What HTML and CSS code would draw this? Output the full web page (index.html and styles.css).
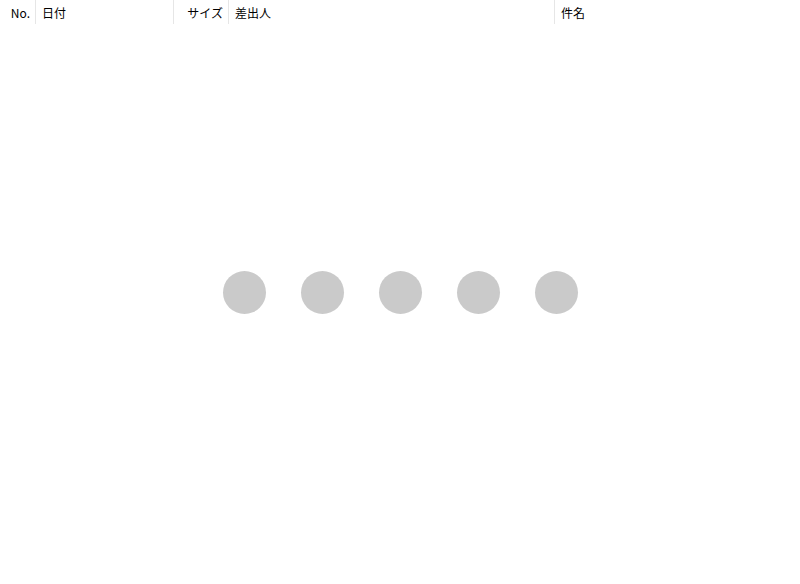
FILE: index.html
```html
<!DOCTYPE html>
<html lang="ja">
<head>
<meta charset="utf-8">
<title>メール一覧</title>
<link rel="stylesheet" href="styles.css">
</head>
<body>
<div class="page">
  <div class="header">
    <div class="cell col-no">No.</div>
    <div class="cell col-date">日付</div>
    <div class="cell col-size">サイズ</div>
    <div class="cell col-from">差出人</div>
    <div class="cell col-subject">件名</div>
  </div>
  <div class="main">
    <div class="loader">
      <span class="dot"></span>
      <span class="dot"></span>
      <span class="dot"></span>
      <span class="dot"></span>
      <span class="dot"></span>
    </div>
  </div>
</div>
</body>
</html>
```
FILE: styles.css
```css
html, body {
  margin: 0;
  padding: 0;
  background: #ffffff;
}
body {
  font-family: "Noto Sans CJK JP", "Noto Sans", sans-serif;
  font-size: 12px;
  color: #000000;
}
.page {
  display: flex;
  flex-direction: column;
  height: 584px;
}
.header {
  display: flex;
  height: 24px;
  flex: none;
}
.cell {
  box-sizing: border-box;
  height: 24px;
  line-height: 25px;
  border-right: 1px solid #e6e6e6;
  white-space: nowrap;
}
.col-no {
  width: 36px;
  text-align: right;
  padding-right: 5px;
}
.col-date {
  width: 138px;
  padding-left: 6px;
}
.col-size {
  width: 55px;
  text-align: right;
  padding-right: 5px;
}
.col-from {
  width: 326px;
  padding-left: 6px;
}
.col-subject {
  flex: 1;
  padding-left: 6px;
  border-right: none;
}
.main {
  flex: 1;
  display: flex;
  align-items: center;
  justify-content: center;
  padding-bottom: 24px;
}
.loader {
  display: flex;
  gap: 35px;
}
.dot {
  width: 43px;
  height: 43px;
  border-radius: 50%;
  background: #cacaca;
}
```
